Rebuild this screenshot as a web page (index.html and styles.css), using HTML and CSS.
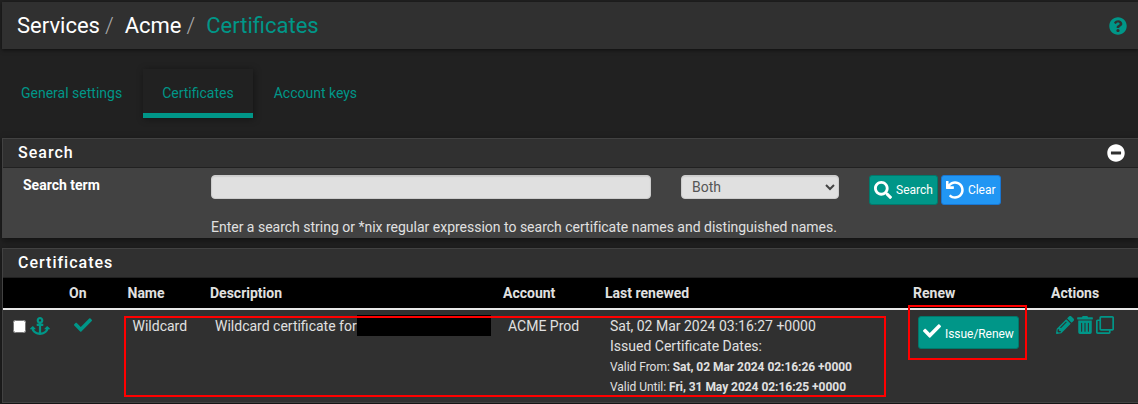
FILE: index.html
```
<!DOCTYPE html>
<html lang="en">
<head>
<meta charset="utf-8">
<title>Services / Acme / Certificates</title>
<link rel="stylesheet" href="styles.css">
</head>
<body>
<header class="topbar">
  <ol class="crumbs"><li>Services</li><li>Acme</li><li class="current">Certificates</li></ol>
  <svg class="icon help" viewBox="0 0 512 512"><path d="M504 256c0 137-111 248-248 248S8 393 8 256 119 8 256 8s248 111 248 248zM262.700 90c-54.500 0-89.300 23-116.500 63.800-3.500 5.300-2.400 12.400 2.700 16.300l34.700 26.300c5.200 3.900 12.600 3 16.700-2.100 17.900-22.700 30.100-35.800 57.300-35.800 20.400 0 45.700 13.100 45.700 33 0 15-12.400 22.700-32.500 34C247.100 238.500 216 254.900 216 296v4c0 6.600 5.400 12 12 12h56c6.600 0 12-5.400 12-12v-1.300c0-28.500 83.200-29.600 83.200-106.700 0-58-60.200-102-116.500-102zM256 338c-25.400 0-46 20.600-46 46s20.600 46 46 46 46-20.600 46-46-20.600-46-46-46z"/></svg>
</header>
<nav class="tabs">
  <a class="tab">General settings</a><a class="tab active">Certificates</a><a class="tab">Account keys</a>
</nav>
<section class="panel search-panel">
  <h2 class="heading">Search
    <svg class="icon toggle" viewBox="0 0 512 512"><path d="M256 8C119 8 8 119 8 256s111 248 248 248 248-111 248-248S393 8 256 8zM124 296c-6.600 0-12-5.400-12-12v-56c0-6.600 5.400-12 12-12h264c6.600 0 12 5.400 12 12v56c0 6.600-5.400 12-12 12H124z"/></svg>
  </h2>
  <div class="search-body">
    <label class="label" for="term">Search term</label>
    <input class="field" id="term" type="text">
    <div class="select field">Both<svg class="chevron" viewBox="0 0 10 7"><path d="M1 1l4 4 4-4"/></svg></div>
    <div class="buttons">
      <button class="btn"><svg class="icon" viewBox="0 0 512 512"><path d="M505 442.700L405.300 343c-4.500-4.500-10.600-7-17-7H372c27.600-35.300 44-79.700 44-128C416 93.100 322.900 0 208 0S0 93.100 0 208s93.100 208 208 208c48.300 0 92.700-16.400 128-44v16.300c0 6.400 2.500 12.500 7 17l99.700 99.700c9.400 9.400 24.600 9.400 33.900 0l28.300-28.300c9.400-9.400 9.400-24.600.1-34zM208 336c-70.700 0-128-57.200-128-128 0-70.700 57.200-128 128-128 70.700 0 128 57.200 128 128 0 70.700-57.200 128-128 128z"/></svg>Search</button>
      <button class="btn blue"><svg class="icon" viewBox="0 0 512 512"><path d="M212.300 224.300H12c-6.600 0-12-5.400-12-12V12C0 5.400 5.400 0 12 0h48c6.600 0 12 5.400 12 12v78.100C117.800 39.300 184.300 7.500 258.200 8c137 1 246.400 111.500 246.100 248.500C504 393.300 392.900 504.100 256 504.100c-64.100 0-122.500-24.300-166.500-64.200-5.100-4.600-5.300-12.600-.5-17.400l34-34c4.500-4.500 11.700-4.700 16.400-.5C170.800 415.300 211.600 432.100 256 432.100c97.300 0 176-78.700 176-176 0-97.300-78.700-176-176-176-58.500 0-110.300 28.500-142.300 72.300h98.600c6.600 0 12 5.400 12 12v48c0 6.500-5.400 11.900-12 11.900z"/></svg>Clear</button>
    </div>
    <p class="hint">Enter a search string or *nix regular expression to search certificate names and distinguished names.</p>
  </div>
</section>
<section class="panel list-panel">
  <h2 class="heading">Certificates</h2>
  <table class="table">
    <colgroup><col class="c-select"><col class="c-on"><col class="c-name"><col class="c-desc"><col class="c-account"><col class="c-date"><col class="c-renew"><col></colgroup>
    <thead><tr><th></th><th>On</th><th>Name</th><th>Description</th><th>Account</th><th>Last renewed</th><th>Renew</th><th>Actions</th></tr></thead>
    <tbody><tr>
      <td><div class="icons pick"><input class="check" type="checkbox"><svg class="icon anchor" viewBox="0 0 576 512"><path d="M13 352h32.400C67.200 454.700 181.900 512 288 512c106.200 0 220.900-57.400 242.600-160H563c10.700 0 16-12.900 8.500-20.500l-67-67c-4.700-4.700-12.300-4.700-17 0l-67 67c-7.500 7.600-2.200 20.500 8.500 20.500h35.100c-20.300 54.300-85 86.600-144.100 93.600V256h52c6.600 0 12-5.400 12-12v-40c0-6.600-5.400-12-12-12h-52v-5.500c37.300-13.200 64-48.700 64-90.500C384 43.800 341.600.7 289.400 0 235.700-.7 192 42.500 192 96c0 41.800 26.700 77.400 64 90.500V192h-52c-6.600 0-12 5.400-12 12v40c0 6.600 5.400 12 12 12h52v189.600c-58.900-7-123.800-39.300-144.100-93.600H147c10.700 0 16-12.900 8.500-20.500l-67-67c-4.700-4.700-12.300-4.700-17 0l-67 67C-3.100 339.100 2.200 352 13 352zM288 64c17.600 0 32 14.400 32 32s-14.400 32-32 32-32-14.400-32-32 14.400-32 32-32z"/></svg></div></td>
      <td><div class="icons"><svg class="icon" viewBox="0 0 512 512"><path d="M173.900 439.400L7.500 273c-10-10-10-26.200 0-36.200l36.200-36.200c10-10 26.200-10 36.200 0L192 312.700 432.100 72.600c10-10 26.200-10 36.200 0l36.200 36.200c10 10 10 26.200 0 36.200L210.100 439.400c-10 10-26.200 10-36.200 0z"/></svg></div></td>
      <td>Wildcard</td>
      <td><div class="desc">Wildcard certificate for<span class="redacted"></span></div></td>
      <td>ACME Prod</td>
      <td>Sat, 02 Mar 2024 03:16:27 +0000<br>Issued Certificate Dates:<div class="validity"><div>Valid From: <b>Sat, 02 Mar 2024 02:16:26 +0000</b></div><div>Valid Until: <b>Fri, 31 May 2024 02:16:25 +0000</b></div></div></td>
      <td><button class="btn renew"><svg class="icon" viewBox="0 0 512 512"><path d="M173.900 439.400L7.500 273c-10-10-10-26.200 0-36.200l36.200-36.200c10-10 26.200-10 36.200 0L192 312.700 432.100 72.600c10-10 26.200-10 36.200 0l36.200 36.200c10 10 10 26.200 0 36.200L210.100 439.400c-10 10-26.200 10-36.200 0z"/></svg><span>Issue/Renew</span></button></td>
      <td><div class="icons actions">
        <svg class="icon" viewBox="0 0 512 512"><path d="M497.900 142.100l-46.100 46.100c-4.700 4.700-12.300 4.700-17 0l-111-111c-4.700-4.700-4.700-12.300 0-17l46.100-46.100c18.700-18.700 49.100-18.700 67.900 0l60.100 60.100c18.800 18.700 18.800 49.100 0 67.900zM284.200 99.800L21.600 362.400.4 483.900c-2.900 16.400 11.400 30.600 27.800 27.800l121.500-21.300 262.600-262.600c4.700-4.700 4.700-12.300 0-17l-111-111c-4.800-4.700-12.400-4.700-17.100 0zM124.100 339.900c-5.500-5.500-5.500-14.300 0-19.800l154-154c5.500-5.500 14.300-5.500 19.800 0s5.500 14.300 0 19.800l-154 154c-5.500 5.500-14.300 5.500-19.800 0zM88 424h48v36.300l-64.500 11.300-31.100-31.100L51.700 376H88v48z"/></svg>
        <svg class="icon trash" viewBox="0 0 448 512"><path d="M32 464a48 48 0 0 0 48 48h288a48 48 0 0 0 48-48V128H32zM304 208a16 16 0 0 1 32 0v224a16 16 0 0 1-32 0zM208 208a16 16 0 0 1 32 0v224a16 16 0 0 1-32 0zM112 208a16 16 0 0 1 32 0v224a16 16 0 0 1-32 0zM432 32H312l-9.400-18.700A24 24 0 0 0 281.100 0H166.800a23.700 23.700 0 0 0-21.400 13.300L136 32H16A16 16 0 0 0 0 48v32a16 16 0 0 0 16 16h416a16 16 0 0 0 16-16V48a16 16 0 0 0-16-16z" fill-rule="evenodd"/></svg>
        <svg class="icon" viewBox="0 0 512 512"><path d="M464 0H144c-26.500 0-48 21.500-48 48v48H48c-26.500 0-48 21.500-48 48v320c0 26.500 21.500 48 48 48h320c26.500 0 48-21.500 48-48v-48h48c26.500 0 48-21.500 48-48V48c0-26.500-21.500-48-48-48zM362 464H54a6 6 0 0 1-6-6V150a6 6 0 0 1 6-6h42v224c0 26.500 21.500 48 48 48h224v42a6 6 0 0 1-6 6zm96-96H150a6 6 0 0 1-6-6V54a6 6 0 0 1 6-6h308a6 6 0 0 1 6 6v308a6 6 0 0 1-6 6z"/></svg>
      </div></td>
    </tr></tbody>
  </table>
  <div class="mark mark-details"></div>
  <div class="mark mark-renew"></div>
</section>
</body>
</html>
```
FILE: styles.css
```
* { box-sizing: border-box; }
body { margin: 0; height: 404px; padding: 2px 0 0 2px; overflow: hidden; background: #212121; color: #e0e0e0; font: 14px/20px Roboto, sans-serif; }
.icon { width: 18px; height: 18px; fill: currentColor; flex: none; display: block; }
.topbar { height: 47px; padding: 0 11px 0 15px; display: flex; align-items: center; justify-content: space-between; background: #303030; box-shadow: 0 1px 4px rgba(0,0,0,.6); }
.crumbs { display: flex; margin: 0; padding: 0; list-style: none; font-size: 22px; line-height: 24px; color: #fff; }
.crumbs li + li::before { content: "/"; color: #aaa; font-weight: 300; padding: 0 11px 0 5px; }
.crumbs .current, .help { color: #009688; }
.tabs { display: flex; height: 49px; margin-top: 20px; color: #009688; }
.tab { padding: 14px 19px; }
.tab + .tab { margin-left: 2px; }
.active { border-bottom: 5px solid #009688; box-shadow: 1px 1px 7px rgba(0,0,0,.4); }
.panel { border: 1px solid #424242; border-right: 0; box-shadow: 0 2px 6px rgba(0,0,0,.5); }
.search-panel { height: 100px; margin-top: 20px; background: #424242; }
.list-panel { position: relative; height: 155px; margin-top: 10px; background: #303030; }
.heading { height: 29px; margin: 0; padding: 0 13px 0 15px; display: flex; align-items: center; justify-content: space-between; background: #303030; border-bottom: 1px solid #212121; color: #fff; font-size: 16px; font-weight: 500; letter-spacing: 1px; }
.search-body { display: grid; grid-template-columns: 158px 440px 158px auto; column-gap: 30px; padding: 7px 0 0 20px; }
.label { color: #fff; font-weight: 700; }
.field { height: 24px; border: 1px solid #ccc; border-radius: 4px; background: #e0e0e0; box-shadow: inset 0 1px 1px rgba(0,0,0,.08); }
.select { display: flex; align-items: center; justify-content: space-between; padding: 0 3px 0 10px; color: #555; }
.chevron { width: 10px; height: 7px; fill: none; stroke: #444; stroke-width: 2; }
.buttons { display: flex; gap: 3px; }
.btn { display: flex; align-items: center; height: 30px; padding: 0 4px; gap: 4px; border: 1px solid #00796b; border-radius: 3px; background: #009688; color: #fff; font: 12px/18px Roboto, sans-serif; }
.blue { background: #2196f3; border-color: #1976d2; }
.hint { grid-column: 2 / -1; margin: 12px 0 0; letter-spacing: -.007px; }
.table { width: 100%; table-layout: fixed; border-collapse: separate; border-spacing: 0; }
.c-select { width: 61px; } .c-on { width: 58.5px; } .c-name { width: 82.5px; } .c-desc { width: 293px; }
.c-account { width: 102px; } .c-date { width: 308px; } .c-renew { width: 138px; }
th { height: 32px; padding: 0 5px; text-align: left; font-weight: 700; background: #000; border-bottom: 2px solid #e8e8e8; }
td { padding: 6px 10px 0; vertical-align: top; white-space: nowrap; }
.validity { padding-top: 1px; font-size: 12px; letter-spacing: -.04px; }
.icons { display: flex; color: #009688; }
.pick { gap: 4px; }
.check { width: 13px; height: 13px; margin: 4px 0 0; }
.anchor { width: 20px; margin-top: 1px; }
.actions { gap: 3px; }
.trash { width: 16px; }
.desc { display: flex; }
.redacted { flex: none; width: 134px; height: 21px; margin-top: -1px; background: #000; }
.renew { height: 33px; }
.renew span { padding-top: 3px; letter-spacing: -.05px; }
.renew .icon { margin-top: -3px; }
/* Red callout frames laid over the table row */
.mark { position: absolute; border: 2px solid #f00; }
.mark-details { left: 121px; top: 67px; width: 762px; height: 81px; }
.mark-renew { left: 905px; top: 56px; width: 119px; height: 55px; }
```
